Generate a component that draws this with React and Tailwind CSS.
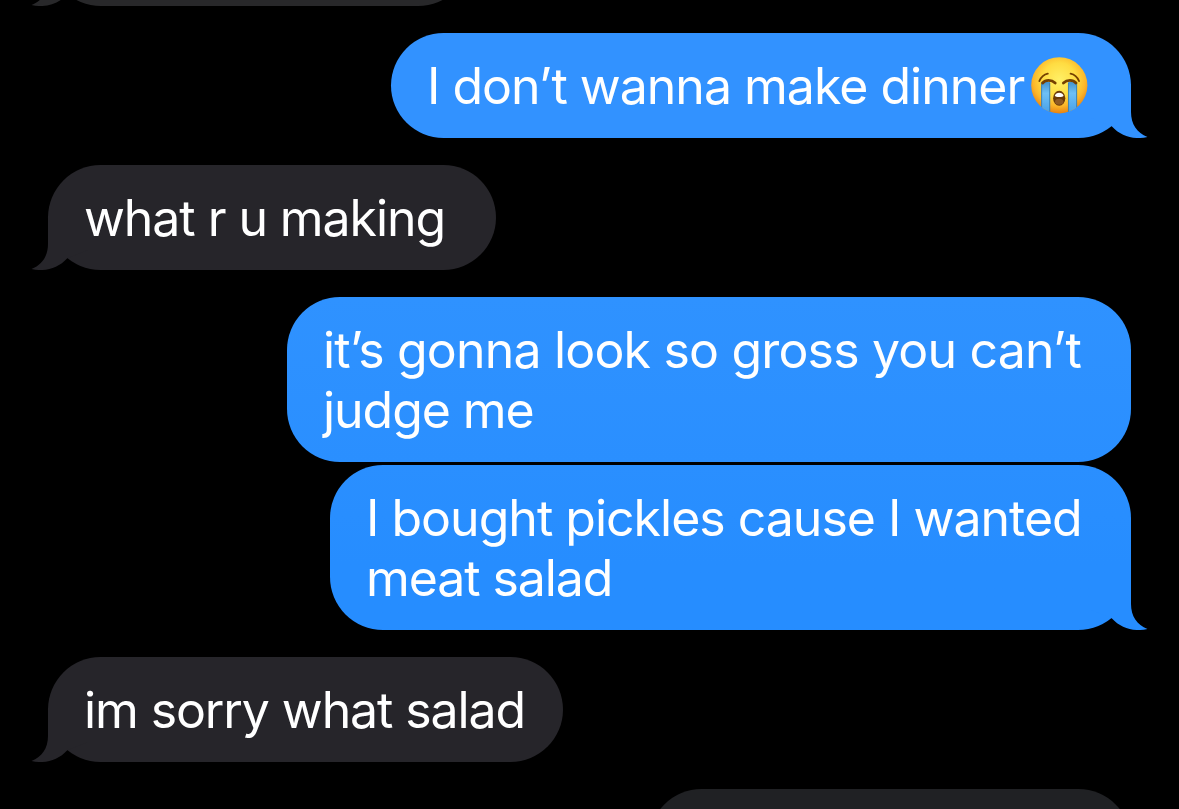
import clsx from "clsx";

const messages = [
  {
    from: "them",
    tail: true,
    size: "h-[106px] w-[423px] -mt-[100px]",
    fill: "bg-[#28282a]",
    tailColor: "text-[#28282a]",
    lines: [],
  },
  {
    from: "me",
    tail: true,
    size: "h-[105px] w-[740px] mt-[27px]",
    fill: "bg-[#3292ff]",
    tailColor: "text-[#3292ff]",
    lines: [
      { text: "I don’t wanna make dinner", spacing: "tracking-[-1px]", emoji: true },
    ],
  },
  {
    from: "them",
    tail: true,
    size: "h-[105px] w-[448px] mt-[27px]",
    fill: "bg-[#26252a]",
    tailColor: "text-[#26252a]",
    lines: [{ text: "what r u making", spacing: "tracking-[-1.07px]" }],
  },
  {
    from: "me",
    size: "h-[165px] w-[844px] mt-[27px]",
    fill: "bg-linear-to-b from-[#2f92ff] to-[#2a8fff]",
    lines: [
      { text: "it’s gonna look so gross you can’t", spacing: "tracking-[-0.82px]" },
      { text: "judge me", spacing: "tracking-[-1.05px]" },
    ],
  },
  {
    from: "me",
    tail: true,
    size: "h-[165px] w-[801px] mt-[3px]",
    fill: "bg-linear-to-b from-[#2a8fff] to-[#268dff] to-60%",
    tailColor: "text-[#268dff]",
    lines: [
      { text: "I bought pickles cause I wanted", spacing: "tracking-[-1px]" },
      { text: "meat salad", spacing: "tracking-[-1.1px]" },
    ],
  },
  {
    from: "them",
    tail: true,
    size: "h-[105px] w-[515px] mt-[27px]",
    fill: "bg-[#26252a]",
    tailColor: "text-[#26252a]",
    lines: [{ text: "im sorry what salad", spacing: "tracking-[-1.1px]" }],
  },
  {
    from: "me",
    size: "h-[105px] w-[482px] mt-[27px]",
    fill: "bg-[#202124]",
    lines: [],
  },
];

// Reaches up to the middle of a one-line bubble so the outer edge stays straight.
function BubbleTail({ side, className }) {
  return (
    <svg
      viewBox="0 0 57 54"
      fill="currentColor"
      aria-hidden="true"
      className={clsx(
        "absolute bottom-0 h-[54px] w-[57px]",
        side === "right" ? "-right-[17px]" : "-left-[17px] -scale-x-100",
        className
      )}
    >
      <path d="M40 0V28C40 40 46 49 56.5 53C43 56 30 52.5 20.7 42.3L0 34V0Z" />
    </svg>
  );
}

function SobbingFace() {
  return (
    <svg
      viewBox="0 0 57 57"
      role="img"
      aria-label="Loudly crying face"
      className="ml-[7px] h-[57px] w-[57px] shrink-0"
    >
      <defs>
        <radialGradient id="face" cx="0.5" cy="0.4" r="0.6">
          <stop offset="0" stopColor="#fff066" />
          <stop offset="0.5" stopColor="#ffdc42" />
          <stop offset="0.78" stopColor="#fcb62a" />
          <stop offset="1" stopColor="#e88312" />
        </radialGradient>
        <linearGradient id="tears" x1="0" y1="0" x2="0" y2="1">
          <stop offset="0" stopColor="#4592cc" />
          <stop offset="0.35" stopColor="#6fc0f5" />
          <stop offset="1" stopColor="#459fe8" />
        </linearGradient>
        <clipPath id="head">
          <circle cx="28.3" cy="28.3" r="28.1" />
        </clipPath>
      </defs>
      <circle cx="28.3" cy="28.3" r="28.1" fill="url(#face)" />
      <g clipPath="url(#head)">
        <path d="M10.3 25H19V57H10.3Z" fill="url(#tears)" />
        <path d="M37.2 25H45.9V57H37.2Z" fill="url(#tears)" />
        <path
          d="M10.6 26V57M18.7 26V57M37.5 26V57M45.6 26V57"
          stroke="#397eae"
          strokeWidth="1.1"
          opacity="0.85"
        />
      </g>
      <g fill="none" stroke="#754000" strokeLinecap="round">
        <path d="M8.4 24C10 20.2 13 17.4 16.8 16.6" strokeWidth="1.9" />
        <path d="M48 24C46.4 20.2 43.4 17.4 39.6 16.6" strokeWidth="1.9" />
        <path d="M11.6 26C14.5 22.6 20.5 22.6 24.2 26" strokeWidth="2.8" />
        <path d="M45 26C42 22.6 36 22.6 32.4 26" strokeWidth="2.8" />
      </g>
      <ellipse cx="28.2" cy="41.3" rx="6.1" ry="7.5" fill="#6b3a08" />
      <ellipse cx="28.2" cy="44.8" rx="4.2" ry="3" fill="#8e5a25" />
      <path d="M23.8 38.8C24.8 34.6 31.6 34.6 32.6 38.8C32.2 40.5 24.2 40.5 23.8 38.8Z" fill="#fff" />
    </svg>
  );
}

function Message({ from, tail, size, fill, tailColor, lines }) {
  const mine = from === "me";

  return (
    <div
      className={clsx(
        "relative flex shrink-0 flex-col justify-center rounded-[53px] pl-[36px]",
        mine ? "self-end" : "self-start",
        size,
        fill
      )}
    >
      {tail ? <BubbleTail side={mine ? "right" : "left"} className={tailColor} /> : null}
      {lines.map((line) => (
        <p key={line.text} className="relative flex h-[60px] items-center whitespace-nowrap">
          <span className={line.spacing}>{line.text}</span>
          {line.emoji ? <SobbingFace /> : null}
        </p>
      ))}
    </div>
  );
}

export default function App() {
  return (
    <main className="flex h-[809px] w-[1179px] flex-col overflow-hidden bg-black px-12 font-['Inter','Liberation_Sans',sans-serif] text-[50px] leading-[60px] text-white">
      {messages.map((message, index) => (
        <Message key={index} {...message} />
      ))}
    </main>
  );
}
